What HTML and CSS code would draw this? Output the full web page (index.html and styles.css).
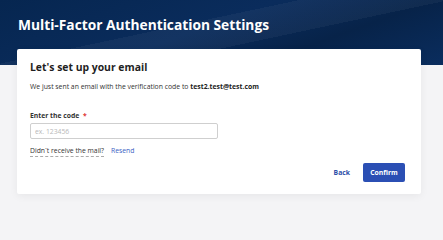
FILE: index.html
```html
<!DOCTYPE html>
<html>
<head>
<meta charset="utf-8">
<link rel="stylesheet" href="styles.css">
</head>
<body>
<header class="hero">
  <h1 class="hero-title">Multi-Factor Authentication Settings</h1>
</header>
<main class="card">
  <h2 class="card-title">Let's set up your email</h2>
  <p class="info">We just sent an email with the verification code to <strong>test2.test@test.com</strong></p>
  <label class="field-label" for="code">Enter the code <span class="req">*</span></label>
  <input class="field-input" id="code" type="text" placeholder="ex. 123456">
  <div class="resend-row">
    <span class="hint">Didn´t receive the mail?</span>
    <a class="resend" href="#">Resend</a>
  </div>
  <div class="actions">
    <button class="btn-back" type="button">Back</button>
    <button class="btn-confirm" type="button">Confirm</button>
  </div>
</main>
</body>
</html>
```
FILE: styles.css
```css
html, body {
  margin: 0;
  padding: 0;
}
body {
  background: #f4f4f6;
  font-family: "Open Sans", "Noto Sans", sans-serif;
  color: #222;
  width: 443px;
  height: 222px;
  overflow: hidden;
}
.hero {
  height: 65px;
  box-sizing: border-box;
  padding: 15px 0 0 18px;
  background:
    linear-gradient(168deg, rgba(255,255,255,0) 0 40%, rgba(255,255,255,0.04) 40% 60%, rgba(255,255,255,0) 60%),
    linear-gradient(160deg, #062650 0%, #0a2c5c 45%, #072349 70%, #0a2d5e 100%);
}
.hero-title {
  margin: 0;
  color: #fff;
  font-size: 13.75px;
  font-weight: 700;
  line-height: 20px;
}
.card {
  display: flex;
  flex-direction: column;
  margin: -16px 22px 0 17px;
  background: #fff;
  border-radius: 2px;
  box-shadow: 0 2px 8px rgba(0,0,0,0.06);
  padding: 11px 16px 12px 13px;
  height: 145px;
  box-sizing: border-box;
}
.card-title {
  margin: 0;
  font-size: 10.4px;
  font-weight: 700;
  line-height: 14px;
  color: #1f1f1f;
}
.info {
  margin: 8px 0 0;
  font-size: 6.85px;
  line-height: 10px;
  color: #333;
}
.info strong {
  font-weight: 700;
  color: #222;
}
.field-label {
  margin-top: 19px;
  font-size: 6.8px;
  font-weight: 700;
  line-height: 9px;
  color: #333;
}
.req {
  color: #d33;
  margin-left: 2px;
}
.field-input {
  margin-top: 3px;
  width: 188px;
  height: 16px;
  box-sizing: border-box;
  border: 1px solid #cfcfcf;
  border-radius: 2px;
  padding: 0 4px;
  font-family: inherit;
  font-size: 6.8px;
  color: #333;
  outline: none;
}
.field-input::placeholder {
  color: #b8b8b8;
}
.resend-row {
  display: flex;
  gap: 7px;
  margin-top: 7px;
  font-size: 6.8px;
  line-height: 10px;
}
.hint {
  color: #333;
  border-bottom: 1px dashed #aaa;
}
.resend {
  color: #3b5fc4;
  text-decoration: none;
}
.actions {
  margin-top: auto;
  display: flex;
  justify-content: flex-end;
  align-items: center;
  gap: 13px;
}
.btn-back {
  background: none;
  border: none;
  padding: 0;
  font-family: inherit;
  font-size: 6.8px;
  font-weight: 700;
  color: #2d4ea8;
}
.btn-confirm {
  width: 42px;
  height: 19px;
  background: #2b4fb4;
  color: #fff;
  border: none;
  border-radius: 2px;
  font-family: inherit;
  font-size: 6.8px;
  font-weight: 700;
  padding: 0;
}
```
